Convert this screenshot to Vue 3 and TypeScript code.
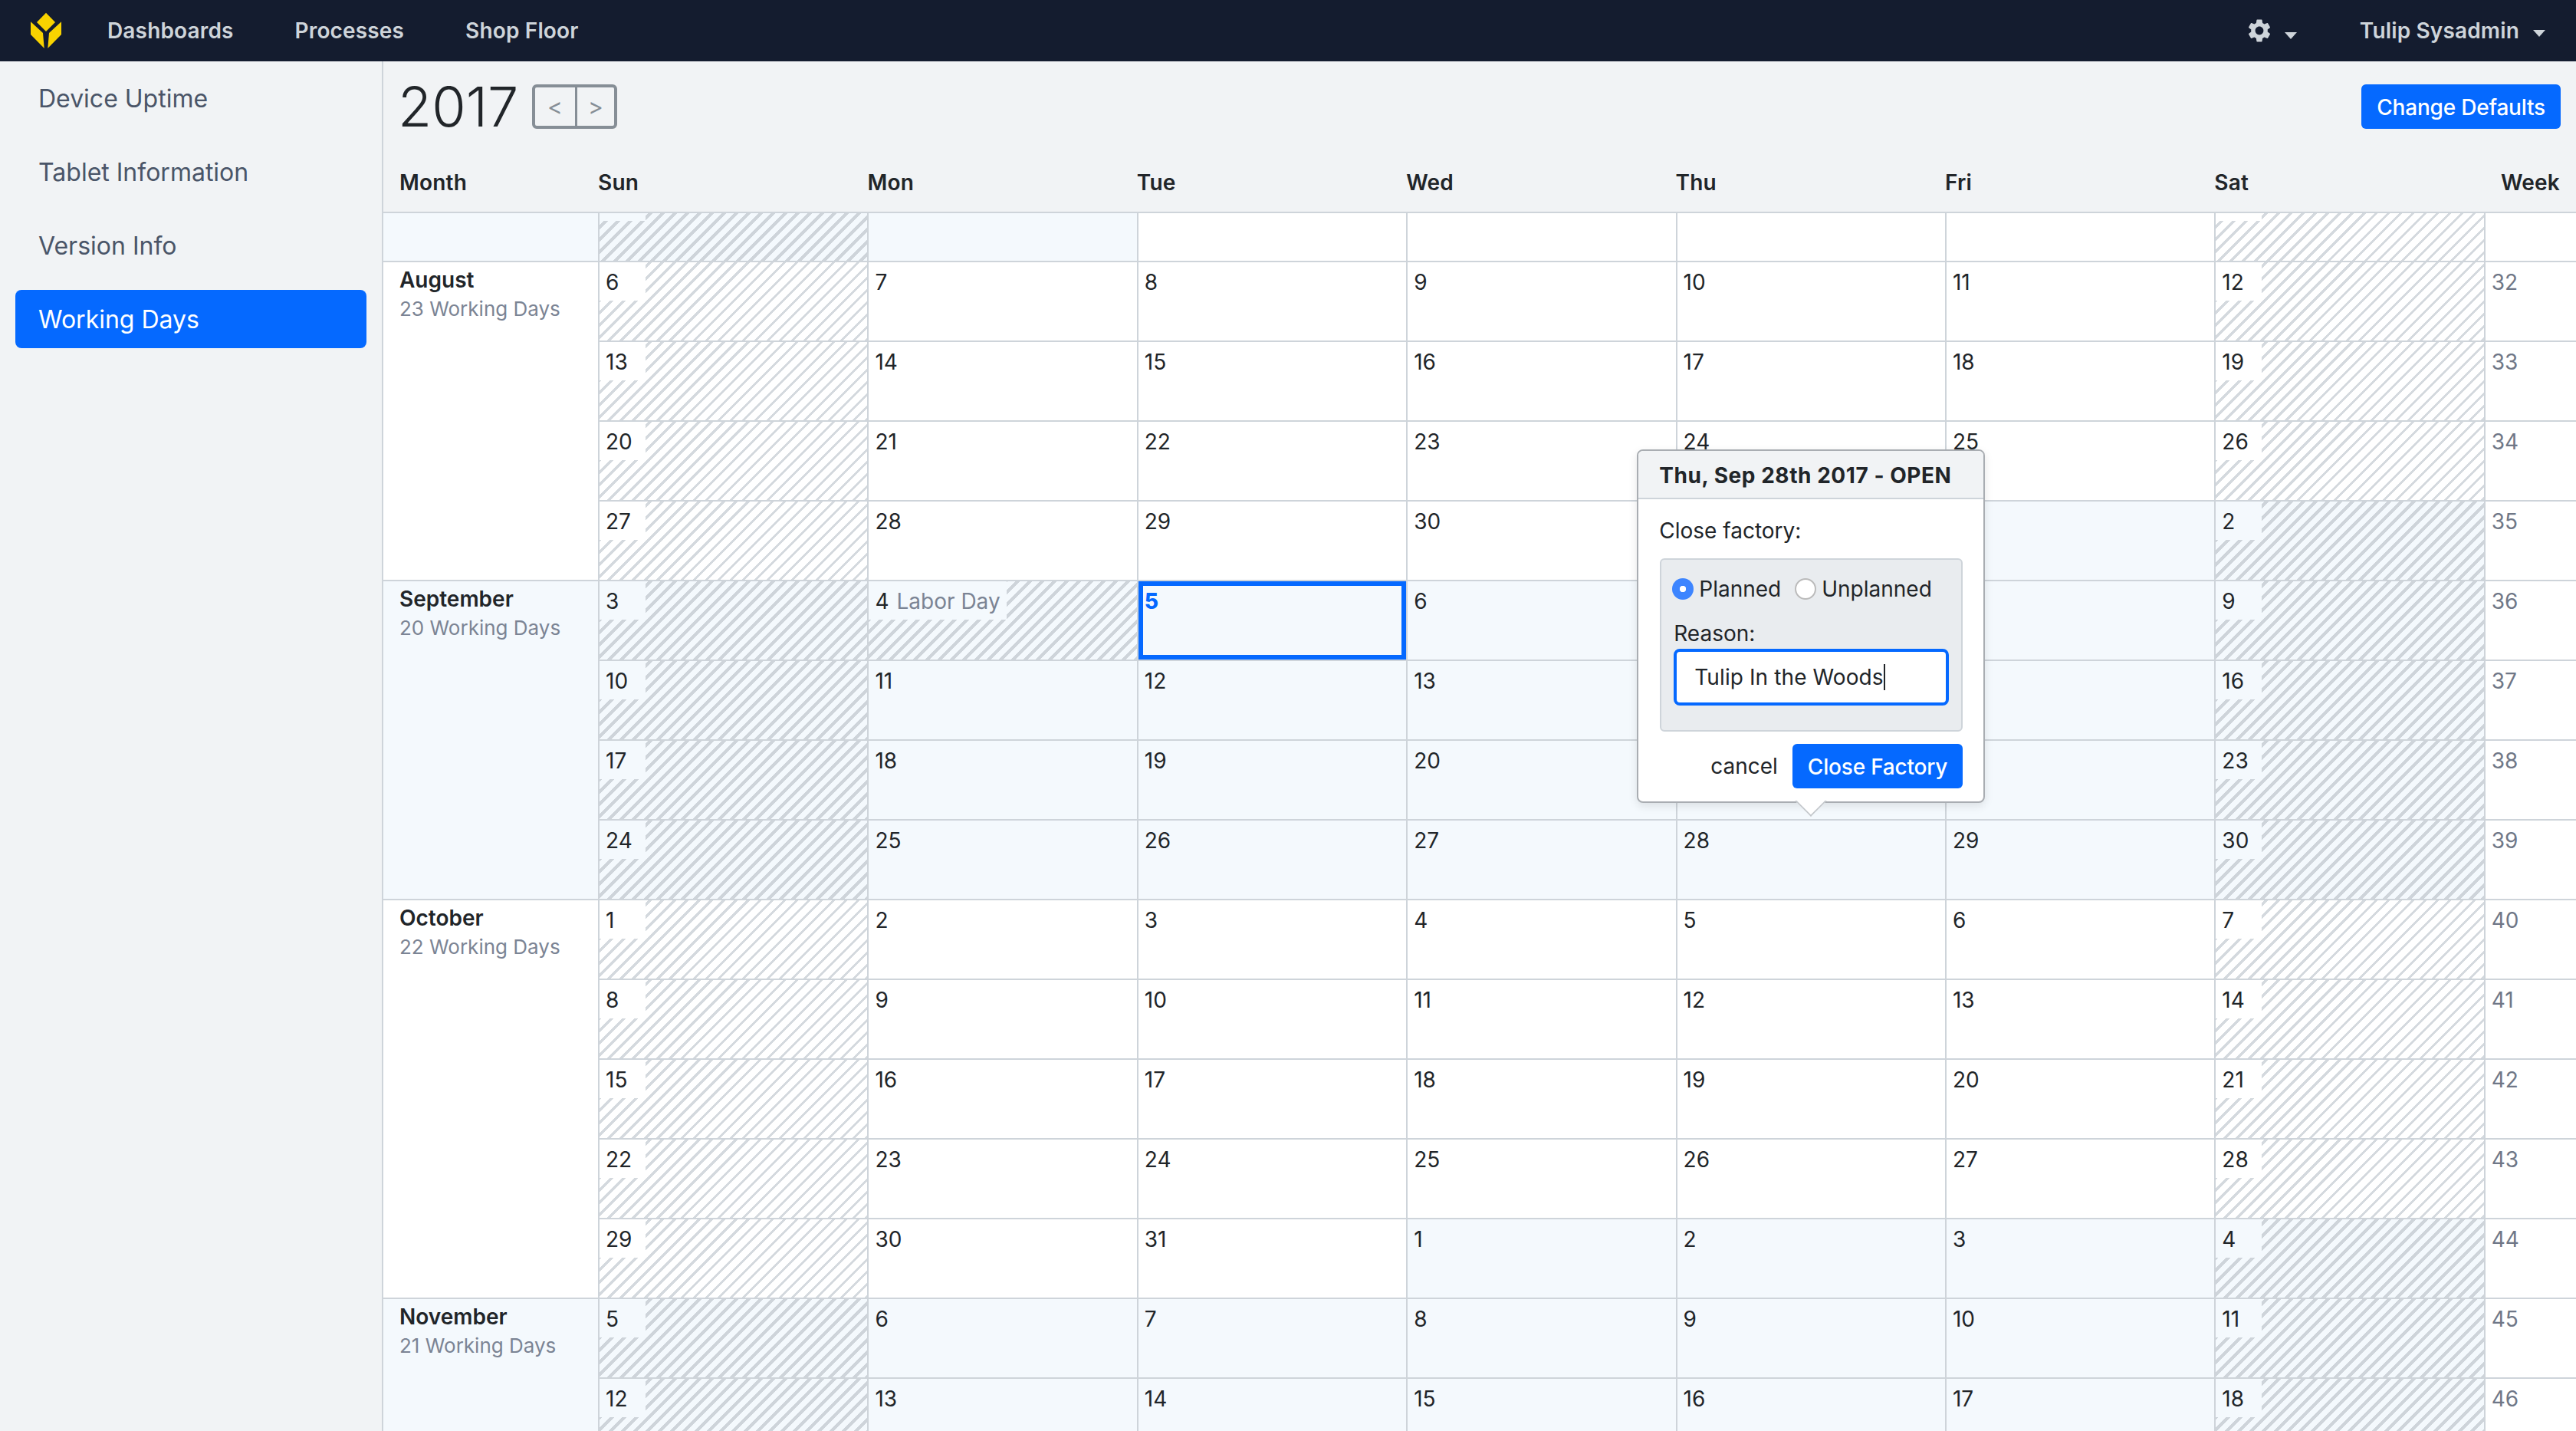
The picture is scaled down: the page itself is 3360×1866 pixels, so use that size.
<template>
  <div class="page">
    <header class="topbar">
      <svg class="logo" viewBox="40 16 40 48">
        <path d="M60 16.7 72 29 60 41 48 29Z" />
        <path d="M40 28.3 56 43 57.7 63 40 45Z" />
        <path d="M80 28.3 64 43 62.3 63 80 45Z" />
      </svg>
      <nav class="nav">
        <a v-for="link in links" :key="link">{{ link }}</a>
      </nav>
      <div class="nav-right">
        <svg class="gear" viewBox="2.5 2 19 20">
          <path
            d="M19.14 12.94c.04-.3.06-.61.06-.94 0-.32-.02-.64-.07-.94l2.03-1.58c.18-.14.23-.41.12-.61l-1.92-3.32c-.12-.22-.37-.29-.59-.22l-2.39.96c-.5-.38-1.03-.7-1.62-.94l-.36-2.54c-.04-.24-.24-.41-.48-.41h-3.84c-.24 0-.43.17-.47.41l-.36 2.54c-.59.24-1.13.57-1.62.94l-2.39-.96c-.22-.08-.47 0-.59.22L2.74 8.87c-.12.21-.08.47.12.61l2.03 1.58c-.05.3-.09.63-.09.94s.02.64.07.94l-2.03 1.58c-.18.14-.23.41-.12.61l1.92 3.32c.12.22.37.29.59.22l2.39-.96c.5.38 1.03.7 1.62.94l.36 2.54c.05.24.24.41.48.41h3.84c.24 0 .44-.17.47-.41l.36-2.54c.59-.24 1.13-.56 1.62-.94l2.39.96c.22.08.47 0 .59-.22l1.92-3.32c.12-.22.07-.47-.12-.61l-2.01-1.58zM12 15.6c-1.98 0-3.6-1.62-3.6-3.6s1.62-3.6 3.6-3.6 3.6 1.62 3.6 3.6-1.62 3.6-3.6 3.6z"
          />
        </svg>
        <span class="caret gear-caret"></span>
        <span class="user">Tulip Sysadmin</span>
        <span class="caret"></span>
      </div>
    </header>

    <div class="body">
      <aside class="sidebar">
        <a v-for="item in sideItems" :key="item" :class="{ active: item === 'Working Days' }">{{ item }}</a>
      </aside>

      <main class="main">
        <div class="toolbar">
          <h1 class="year">2017</h1>
          <div class="stepper">
            <button>&lt;</button>
            <button>&gt;</button>
          </div>
          <button class="primary defaults">Change Defaults</button>
        </div>

        <div class="cal-grid cal-head">
          <div v-for="h in headers" :key="h">{{ h }}</div>
        </div>

        <div class="cal-grid cal-body">
          <template v-for="row in rows" :key="row.index">
            <div v-if="row.month" class="month" :class="{ blue: row.month.blue }" :style="{ gridRow: 'span ' + row.month.span }">
              <strong>{{ row.month.name }}</strong>
              <span v-if="row.month.days">{{ row.month.days }} Working Days</span>
            </div>
            <div v-for="day in row.days" :key="day.key" class="day" :class="day.classes">
              <div class="tag">
                {{ day.label }}<span v-if="day.holiday" class="holiday">{{ day.holiday }}</span>
              </div>

              <div v-if="day.key === '8-28'" class="popover">
                <div class="pop-head">Thu, Sep 28th 2017 - OPEN</div>
                <div class="pop-body">
                  <div class="pop-line">Close factory:</div>
                  <div class="panel">
                    <div class="radios">
                      <span class="radio on"></span>
                      <span>Planned</span>
                      <span class="radio"></span>
                      <span>Unplanned</span>
                    </div>
                    <div class="reason">Reason:</div>
                    <div class="input">Tulip In the Woods<i class="cursor"></i></div>
                  </div>
                  <div class="pop-foot">
                    <span class="cancel">cancel</span>
                    <button class="primary">Close Factory</button>
                  </div>
                </div>
              </div>
            </div>
            <div class="week">{{ row.week }}</div>
          </template>
        </div>
      </main>
    </div>
  </div>
</template>

<script setup lang="ts">
interface MonthInfo {
  name: string
  days: number
  span: number
  blue: boolean
}

const links = ['Dashboards', 'Processes', 'Shop Floor']
const sideItems = ['Device Uptime', 'Tablet Information', 'Version Info', 'Working Days']
const headers = ['Month', 'Sun', 'Mon', 'Tue', 'Wed', 'Thu', 'Fri', 'Sat', 'Week']

const monthStarts: Record<number, MonthInfo> = {
  0: { name: '', days: 0, span: 1, blue: true },
  1: { name: 'August', days: 23, span: 4, blue: false },
  5: { name: 'September', days: 20, span: 4, blue: true },
  9: { name: 'October', days: 22, span: 5, blue: false },
  14: { name: 'November', days: 21, span: 2, blue: true }
}

const rows = Array.from({ length: 16 }, (_, index) => {
  const days = Array.from({ length: 7 }, (_, col) => {
    const date = new Date(2017, 6, 30 + index * 7 + col)
    const month = date.getMonth()
    const n = date.getDate()
    const holiday = month === 8 && n === 4 ? 'Labor Day' : ''
    return {
      key: month + '-' + n,
      label: index === 0 ? '' : String(n),
      holiday,
      classes: {
        blue: month % 2 === 0,
        hatch: col === 0 || col === 6 || holiday !== '',
        selected: month === 8 && n === 5,
        anchor: month === 8 && n === 28,
        clipped: index === 0
      }
    }
  })
  return {
    index,
    days,
    month: monthStarts[index],
    week: index === 0 ? '' : 31 + index
  }
})
</script>

<style>
body {
  margin: 0;
  background: #f1f3f5;
}
</style>

<style scoped>
.page {
  height: 1866px;
  overflow: hidden;
  display: flex;
  flex-direction: column;
  font-family: Inter, "Noto Sans", sans-serif;
  font-size: 28px;
  color: #212529;
}
.topbar {
  flex: none;
  height: 80px;
  display: flex;
  align-items: center;
  background: #141c2f;
  color: #ced4da;
  font-weight: 600;
}
.logo {
  width: 40px;
  height: 48px;
  margin-left: 40px;
  fill: #f9d300;
}
.nav {
  display: flex;
  gap: 80px;
  margin-left: 60px;
  letter-spacing: 0.15px;
}
.nav-right {
  margin-left: auto;
  display: flex;
  align-items: center;
  padding-right: 40px;
}
.gear {
  width: 30px;
  height: 30px;
  fill: #ced4da;
}
.caret {
  width: 0;
  height: 0;
  margin-top: 7px;
  margin-left: 18px;
  border: 8px solid transparent;
  border-top: 9px solid #ced4da;
  border-bottom: 0;
}
.gear-caret {
  margin-top: 12px;
  margin-right: 82px;
}
.user {
  letter-spacing: 0.15px;
}
.body {
  flex: 1;
  display: flex;
  min-height: 0;
}
.sidebar {
  flex: none;
  width: 500px;
  box-sizing: border-box;
  padding: 10px 20px;
  display: flex;
  flex-direction: column;
  gap: 20px;
  border-right: 2px solid #ced4da;
  font-size: 32px;
  color: #4a5568;
}
.sidebar a {
  height: 76px;
  line-height: 78px;
  padding-left: 30px;
  border-radius: 8px;
}
.sidebar a.active {
  background: #0569ff;
  color: #fff;
}
.main {
  flex: 1;
  min-width: 0;
}
.toolbar {
  height: 116px;
  box-sizing: border-box;
  padding: 30px 20px 0 19px;
  display: flex;
  align-items: flex-start;
}
.year {
  margin: 0 18px 0 0;
  font-size: 72px;
  font-weight: 300;
  line-height: 58px;
}
.stepper {
  display: flex;
  height: 58px;
  box-sizing: border-box;
  border: 4px solid #868e96;
  border-radius: 6px;
}
.stepper button {
  width: 51.5px;
  padding: 0;
  border: 0;
  background: none;
  font: 30px Inter, sans-serif;
  color: #868e96;
}
.stepper button + button {
  border-left: 3px solid #868e96;
}
.primary {
  height: 58px;
  padding: 2px 20px 0;
  border: 0;
  border-radius: 6px;
  background: #0569ff;
  color: #fff;
  font: 500 28px Inter, sans-serif;
  letter-spacing: -0.2px;
}
.defaults {
  margin-left: auto;
}
.cal-grid {
  display: grid;
  grid-template-columns: 280px repeat(7, 351.4px) 1fr;
}
.cal-head {
  height: 82px;
  box-sizing: border-box;
  padding-top: 24px;
  border-bottom: 2px solid #ced4da;
  line-height: 36px;
  font-weight: 600;
  letter-spacing: 0.2px;
}
.cal-head div:first-child {
  padding-left: 21px;
}
.cal-head div:last-child {
  text-align: right;
  padding-right: 21px;
}
.cal-body {
  grid-template-rows: 64px;
  grid-auto-rows: 104px;
}
.month {
  box-sizing: border-box;
  padding: 4px 0 0 21px;
  display: flex;
  flex-direction: column;
  line-height: 38px;
  background: #fff;
  border-bottom: 2px solid #ced4da;
}
.month strong {
  font-weight: 600;
}
.month span {
  font-size: 26px;
  color: #7b8494;
}
.month.blue,
.day.blue {
  background-color: #f4f9fd;
}
.day {
  position: relative;
  box-sizing: border-box;
  background-color: #fff;
  border-left: 2px solid #ced4da;
  border-bottom: 2px solid #ced4da;
}
.day.hatch {
  background-image: repeating-linear-gradient(135deg, #d4d9de 0 3px, transparent 3px 11.3px);
}
.day.blue.hatch {
  background-image: repeating-linear-gradient(135deg, #ced4da 0 4px, transparent 4px 11.3px);
}
.tag {
  display: inline-block;
  vertical-align: top;
  box-sizing: border-box;
  min-width: 60px;
  height: 50px;
  padding: 6px 8px 4px;
  line-height: 40px;
  background-color: #fff;
}
.day.blue .tag {
  background-color: #f4f9fd;
}
.day.clipped .tag {
  height: 10px;
  padding: 0;
}
.holiday {
  margin-left: 10px;
  color: #7b8494;
}
.day.selected {
  box-shadow: inset 0 0 0 6px #0569ff;
}
.day.selected .tag {
  background: none;
  color: #0569ff;
  font-weight: 800;
}
.week {
  box-sizing: border-box;
  padding: 6px 0 0 8px;
  line-height: 40px;
  background: #fff;
  border-left: 2px solid #ced4da;
  border-bottom: 2px solid #ced4da;
  color: #6f7787;
}
.popover {
  position: absolute;
  z-index: 10;
  left: 50%;
  bottom: calc(100% + 23px);
  width: 454px;
  margin-left: -227px;
  box-sizing: border-box;
  background: #fff;
  border: 2px solid #a9adb2;
  border-radius: 8px;
  box-shadow: 0 4px 12px rgba(0, 0, 0, 0.1);
}
.popover::after {
  content: "";
  position: absolute;
  left: 50%;
  bottom: -14px;
  width: 30px;
  height: 30px;
  margin-left: -15px;
  box-sizing: border-box;
  background: #fff;
  border-right: 2px solid #c4c8cc;
  border-bottom: 2px solid #c4c8cc;
  transform: rotate(45deg);
  clip-path: polygon(100% 0, 100% 100%, 0 100%);
}
.pop-head {
  height: 63px;
  box-sizing: border-box;
  padding: 12px 27px 0;
  line-height: 40px;
  font-weight: 700;
  letter-spacing: 0.55px;
  background: #f1f3f5;
  border-bottom: 2px solid #ced4da;
  border-radius: 6px 6px 0 0;
  white-space: nowrap;
}
.pop-body {
  padding: 21px 27px 17px 28px;
}
.pop-line {
  margin-left: -1px;
  line-height: 40px;
}
.panel {
  margin-top: 16px;
  box-sizing: border-box;
  height: 226px;
  padding: 18px 16px 0;
  background: #e9ecef;
  border: 2px solid #ced4da;
  border-radius: 6px;
}
.radios {
  display: flex;
  align-items: center;
  height: 40px;
  margin-left: -2px;
  white-space: nowrap;
}
.radio {
  flex: none;
  width: 28px;
  height: 28px;
  margin-left: 18px;
  margin-right: 7px;
  box-sizing: border-box;
  background: #fff;
  border: 2px solid #bbb;
  border-radius: 50%;
}
.radio.on {
  margin-left: 0;
  background: #3d85ff radial-gradient(circle, #fff 0 4px, transparent 4.5px);
  border: 0;
}
.reason {
  margin-top: 20px;
  line-height: 36px;
}
.input {
  margin-top: 2px;
  height: 74px;
  box-sizing: border-box;
  padding-left: 23px;
  display: flex;
  align-items: center;
  letter-spacing: 0.1px;
  background: #fff;
  border: 4px solid #0569ff;
  border-radius: 8px;
}
.cursor {
  width: 2px;
  height: 34px;
  background: #212529;
}
.pop-foot {
  margin-top: 16px;
  display: flex;
  justify-content: flex-end;
  align-items: center;
  gap: 19px;
}
</style>
